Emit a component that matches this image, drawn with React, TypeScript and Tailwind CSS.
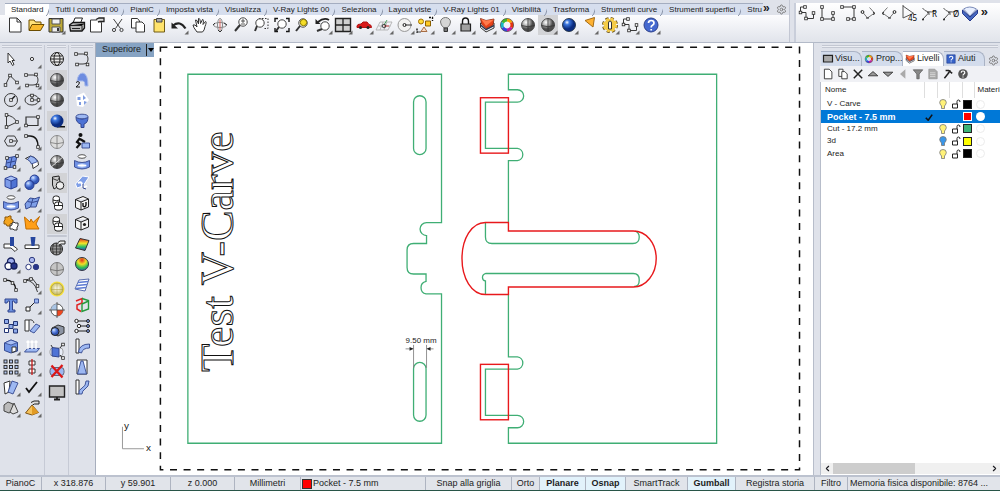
import type { ReactNode } from 'react';
import { ChevronLeft, ChevronRight, Settings } from 'lucide-react';

type Tool = { name: string; art: ReactNode; flyout?: boolean; pressed?: boolean };

const blueArt = { fill: '#9db8f2', stroke: '#33478f', strokeWidth: 0.9 };
const lineArt = { fill: 'none', stroke: '#3a3a3a', strokeWidth: 1 };
const boldArt = { fill: 'none', stroke: '#151515', strokeWidth: 1.4 };

function Nodes({ at }: { at: number[][] }) {
  return (
    <>
      {at.map(([x, y]) => (
        <rect key={`${x}-${y}`} x={x - 1.3} y={y - 1.3} width="2.6" height="2.6" fill="#fff" stroke="#222" strokeWidth=".8" />
      ))}
    </>
  );
}

function Ball({ fill = 'url(#grayBall)', lines = '#333' }: { fill?: string; lines?: string }) {
  return (
    <>
      <circle cx="10" cy="10" r="6.5" fill={fill} stroke={lines} strokeWidth=".8" />
      <path d="M10 3.5v13M3.5 10.5q6.5 2.5 13 0" fill="none" stroke={lines} strokeWidth=".8" />
    </>
  );
}

function Lens({ x = 12, y = 7, fill = '#fff' }: { x?: number; y?: number; fill?: string }) {
  return (
    <>
      <path d={`M${x - 3} ${y + 3}L4 16`} stroke="#333" strokeWidth="2" />
      <circle cx={x} cy={y} r="4.2" fill={fill} stroke="#444" />
    </>
  );
}

const sheet = <path d="M4.500 3h7.500l4 4v10H4.500zM12 3v4h4" fill="#fff" stroke="#333" />;
const polyline = (
  <>
    <path d="M8 4H3.500v5.500H9v6h7.500V10" {...lineArt} />
    <Nodes at={[[8, 4], [3.5, 9.5], [9, 15.5], [16.5, 10]]} />
  </>
);
const curveNodes = (
  <>
    <path d="M4 5h7q5 0 5 5t-5 5H6" {...lineArt} />
    <Nodes at={[[4, 5], [14, 4.5], [15.5, 15.5], [5, 15.5]]} />
  </>
);
const wireBall = (
  <g fill="none" stroke="#222">
    <circle cx="10" cy="10" r="6.500" fill="#eee" />
    <ellipse cx="10" cy="10" rx="3" ry="6.500" />
    <path d="M4.500 7h11M3.500 10h13M4.500 13h11" />
  </g>
);
const cylinderWall = (
  <>
    <path d="M2.500 8.500q7.500 4 15 0V15q-7.500 4-15 0z" fill="#6f90e4" stroke="#33478f" strokeWidth=".9" />
    <ellipse cx="10" cy="4.500" rx="4" ry="1.800" fill="#fff" stroke="#555" />
    <ellipse cx="10" cy="13.500" rx="4.500" ry="1.700" fill="#fff" stroke="#9db8f2" />
  </>
);
const capsules = (
  <g fill="#fff" stroke="#222">
    <rect x="6" y="3" width="6.500" height="8.500" rx="2.500" />
    <path d="M6 7q3 1.500 6.500 0" fill="none" />
    <rect x="7.500" y="9" width="8" height="8" rx="2.500" />
    <path d="M7.500 12.500h8M11.500 9v3.500" fill="none" />
  </g>
);
const openBox = <path d="M3.500 6.500 11 3.500l5.500 2.500v8L9 17l-5.500-2.500zM3.500 6.500 9 9l7.500-3M9 9v8" fill="#f4f4f4" stroke="#222" />;
const layerMark = (
  <>
    <path d="M3.500 8v4.500L9 17l8-4V8z" fill="#fff" stroke="#333" />
    <path d="M3.500 10 9 14.500l8-4" fill="none" stroke="#2b3a55" strokeWidth="1.500" />
    <path d="M3.500 3.500 9 5.500l8-1.500-1 6-7 3.500L4.500 9z" fill="#e8421a" stroke="#7e2712" strokeWidth=".8" />
    <path d="M4 4l5 7 8-6.500-8 1z" fill="#ff7a4c" />
  </>
);
const colorRing = (
  <g fill="none" strokeWidth="3">
    <path d="M10 5a5 5 0 0 1 4.300 2.500" stroke="#f5a500" />
    <path d="M14.300 7.500a5 5 0 0 1 0 5" stroke="#e5330f" />
    <path d="M14.300 12.500A5 5 0 0 1 10 15" stroke="#c21ba2" />
    <path d="M10 15a5 5 0 0 1-4.300-2.500" stroke="#3646df" />
    <path d="M5.700 12.500a5 5 0 0 1 0-5" stroke="#16b7c2" />
    <path d="M5.700 7.500A5 5 0 0 1 10 5" stroke="#43b829" />
    <circle cx="10" cy="10" r="6.600" stroke="#333" strokeWidth=".6" />
  </g>
);
const helpMark = (
  <>
    <circle cx="10" cy="10" r="7" fill="#4468cf" stroke="#2b3f8a" />
    <path d="M7.500 8q0-2.500 2.700-2.500T13 8q0 1.400-1.500 2.200T10.200 12.500M10.200 14v1.500" fill="none" stroke="#fff" strokeWidth="1.700" />
  </>
);

const standardTools: Tool[] = [
  { name: 'Nuovo', art: sheet },
  { name: 'Apri', art: <><path d="M3 15V5h5l1.500 2H15v3" fill="#ffe27a" stroke="#6c4d00" /><path d="M3 15.500 6 9.500h12l-3.500 6z" fill="#f8b92d" stroke="#6c4d00" /></> },
  { name: 'Salva', flyout: true, art: <><path d="M3 3.500h14v13.500H3z" fill="#bda938" stroke="#333" /><path d="M6 4h8v5H6zM6 12h8v5H6z" fill="#efefef" stroke="#555" /><path d="M11 13h2v3h-2z" fill="#333" /></> },
  { name: 'Stampa', art: <><path d="M6 8 8 3h7.500l-2 5" fill="#fff" stroke="#222" /><path d="M2.500 10 6 7.500h11.500V13L15 16H3.500z" fill="#bbb" stroke="#151515" strokeWidth="1.300" /><path d="M3 10.500h12l2-2M5 13.500h8M15 11v4" stroke="#222" /></> },
  { name: 'Proprietà', art: <><path d="M3.500 5h7l4 2.500V17h-11z" fill="#fff" stroke="#333" /><path d="M9 4.500 12 3h5v3.500h-4L11 7" fill="#ddd" stroke="#222" strokeWidth="1.300" /></> },
  { name: 'Taglia', art: <g fill="none" stroke="#444"><path d="M5.500 4l7 9.500M14 4l-6.500 9.500" /><circle cx="6" cy="15" r="1.600" /><circle cx="13.500" cy="15" r="1.600" /></g> },
  { name: 'Copia', art: <g fill="#fff" stroke="#333"><path d="M3.500 3.500h6L11.500 6v7h-8z" /><path d="M8 7h6l2.500 2.500V17H8z" /></g> },
  { name: 'Incolla', art: <><path d="M5 4.500h10.500V17H5z" fill="#ffe36c" stroke="#6f5b14" /><path d="M7.500 3.500h5.500V7H7.500z" fill="#aaa" stroke="#444" /></> },
  { name: 'Annulla', flyout: true, art: <><path d="M4 10.500q7-5.500 12.500 3" fill="none" stroke="#222" strokeWidth="2.200" /><path d="M2.500 7.500v6H9z" fill="#222" /></> },
  { name: 'Sposta vista', art: <path d="M7 17q-4-5-4-7 2-1 4 2L5.500 5q1.500-1 3 4V3.500q1.500-1 2 5l2-4q1.500-.5.500 5l2.500-3q1.500 0-.5 5-.5 4-2.500 5.500z" fill="#fff" stroke="#333" /> },
  { name: 'Ruota vista', art: <g fill="none" stroke="#888"><ellipse cx="10" cy="10" rx="6.500" ry="2.500" /><ellipse cx="10" cy="10" rx="2.500" ry="6.500" /><path d="M10 5v10" stroke="#d8665e" /><path d="M8 15l2 2 2-2M14 8l3 2M5 8l-2 2" stroke="#333" /></g> },
  { name: 'Zoom', art: <><Lens /><path d="M10 6h4M12 4v4M10 9h4" stroke="#333" strokeWidth=".8" /></> },
  { name: 'Zoom finestra', art: <><path d="M8 3.500h9v10h-5" fill="none" stroke="#333" strokeDasharray="1.500 1.500" /><Lens x={9} y={8} /></> },
  { name: 'Zoom estensioni', art: <><Lens x={10} y={9} /><path d="M3 7V3.500h3M14 3.500h3V7M17 13v3.500h-3M6 16.500H3V13" {...boldArt} /></> },
  { name: 'Zoom selezione', art: <><Lens x={11} y={8} /><circle cx="11.500" cy="7.500" r="3.200" fill="#f5dd27" stroke="#857500" /></> },
  { name: 'Vista precedente', flyout: true, art: <><Lens x={12} y={11} /><path d="M5 7q6-5 11-2" fill="none" stroke="#222" strokeWidth="1.800" /><path d="M2.500 4v5h5z" fill="#222" /></> },
  { name: 'Quattro viste', flyout: true, art: <><path d="M2.500 3.500h15v13h-15z" fill="#d0d0d0" stroke="#222" strokeWidth="1.400" /><path d="M10 3.500v13M2.500 10h15" stroke="#222" strokeWidth="1.300" /></> },
  { name: 'Vista destra', flyout: true, art: <><path d="M3 11q0-2 4-2l2-2h4l2 2.500q2.500 0 2.500 3H3z" fill="#d91b1b" stroke="#b01515" /><circle cx="6.500" cy="12.500" r="1.500" fill="#222" /><circle cx="14" cy="12.500" r="1.500" fill="#222" /></> },
  { name: 'Piano C', flyout: true, art: <g fill="none" stroke="#aaa" strokeWidth=".8"><path d="M6 7h12l-4 8H2zM4.500 11h12M9 7l-3 8M13 7l-3 8" /><path d="M10 11h5" stroke="#d02020" /><path d="M10 10l3-5" stroke="#24913b" /><circle cx="10" cy="11" r="1.800" stroke="#222" /></g> },
  { name: 'Punti oggetto', flyout: true, art: <g fill="none" stroke="#999"><circle cx="9.500" cy="10" r="6.500" fill="#f1f1f1" /><path d="M10 10h7" stroke="#333" /><circle cx="9.500" cy="10" r="1.500" stroke="#222" /></g> },
  { name: 'Seleziona oggetti', flyout: true, art: <><path d="M14 2.500h3.500V6M2 13.500V17h3.500" {...boldArt} strokeDasharray="2 1" /><circle cx="6" cy="6.500" r="2.500" fill="#ffdc37" stroke="#a36e00" /><path d="M10.500 6h5v5h-5z" fill="#ffca24" stroke="#8c6100" /><path d="M9 12l3 4.500H6z" fill="#f8dcc6" stroke="#a76c44" /></> },
  { name: 'Nascondi', flyout: true, art: <><path d="M8 13q-3.500-3-3.500-6a5 4.500 0 0 1 10 0q0 3-3.500 6z" fill="#d5d5d5" stroke="#777" /><path d="M8 13h3.500v3.500H8z" fill="#777" stroke="#333" /></> },
  { name: 'Blocca', flyout: true, art: <><path d="M6.500 10V6.500Q6.500 3 9.500 3t3 3.500V10" {...boldArt} /><path d="M5 9h9.500v7H5z" fill="#a0a0a0" stroke="#222" strokeWidth="1.200" /></> },
  { name: 'Livelli', flyout: true, art: layerMark },
  { name: 'Colori', flyout: true, art: colorRing },
  { name: 'Ombreggiata', art: <Ball /> },
  { name: 'Vista ombreggiata', flyout: true, pressed: true, art: <Ball /> },
  { name: 'Rendering', flyout: true, art: <circle cx="10" cy="10" r="6.500" fill="url(#deepBall)" stroke="#123" strokeWidth=".8" /> },
  { name: 'Luce direzionale', flyout: true, art: <path d="M6 5.500 15.500 2.500 14 12z" fill="#ffb232" stroke="#a56b14" /> },
  { name: 'Opzioni', flyout: true, art: <><circle cx="10" cy="10" r="6" fill="#f5cc48" stroke="#5d4612" strokeWidth="4" strokeDasharray="2.700 2" /><circle cx="10" cy="10" r="6" fill="#f5cc48" stroke="#f5cc48" strokeWidth="2.500" strokeDasharray="2.700 2" /><path d="M8.500 14V8q0-2 1.500-2t1.500 2v6z" fill="#fff" stroke="#333" /></> },
  { name: 'Quote', flyout: true, art: polyline },
  { name: 'Guida', flyout: true, art: helpMark },
];

const drawTools: Tool[] = [
  { name: 'Seleziona', art: <path d="M7 4v10l2-2 2.500 4.500 1.500-1-2-4h2.500z" fill="#fff" stroke="#333" /> },
  { name: 'Punto', flyout: true, art: <circle cx="10" cy="10" r="1.600" fill="#fff" stroke="#333" /> },
  { name: 'Polilinea', flyout: true, art: <><path d="M4.500 15 9 5.500l7 7" {...lineArt} /><Nodes at={[[4.5, 15], [9, 5.5], [16, 12.5]]} /></> },
  { name: 'Curva', flyout: true, art: curveNodes },
  { name: 'Cerchio', flyout: true, art: <><circle cx="10" cy="10" r="6.500" {...lineArt} /><path d="M10 10l4-4" {...boldArt} /><Nodes at={[[10, 10]]} /></> },
  { name: 'Ellisse', flyout: true, art: <><ellipse cx="10" cy="10" rx="7" ry="5" {...lineArt} /><path d="M10 10h7M10 10V5" {...lineArt} /><Nodes at={[[10, 10], [16.5, 10], [10, 5.5]]} /></> },
  { name: 'Arco', flyout: true, art: <><path d="M5.500 4q7 1 10.500 7M5.500 4v12L16 11" {...lineArt} /><Nodes at={[[5.5, 4], [5.5, 16], [16, 11]]} /></> },
  { name: 'Rettangolo', flyout: true, art: <><path d="M4 6h12v8.500H4z" fill="none" stroke="#333" strokeWidth="1.200" /><Nodes at={[[4, 14.5], [16, 6]]} /></> },
  { name: 'Poligono', flyout: true, art: <><path d="M6.500 5h7l3 5-3 5h-7l-3-5z" {...lineArt} /><path d="M10 10h6" {...lineArt} /><Nodes at={[[10, 10]]} /></> },
  { name: 'Raccorda', flyout: true, art: <><path d="M4 5h4q8 0 8 11" {...boldArt} /><Nodes at={[[4, 5], [16, 16]]} /></> },
  { name: 'Superficie', flyout: true, art: <><path d="M6 6l10-2-2.500 11-9 1z" fill="#6f90e4" stroke="#33478f" /><path d="M11 5 9 15M5.500 11l9-2" stroke="#33478f" /><Nodes at={[[6, 6], [16, 4], [13.5, 15], [4.5, 16]]} /></> },
  { name: 'Superficie curva', flyout: true, art: <><path d="M3.500 6.500 8.500 4q8 2 8 9L11 16.500q0-8-7.500-10z" fill="#fff" stroke="#333" /><path d="M8.500 4q5 1 7 5.500L9.500 12q-1-3-4-4.500z" {...blueArt} /></> },
  { name: 'Parallelepipedo', flyout: true, art: <><path d="M4 6.500 10 4l6 2.500v8L10 17l-6-2.500z" fill="#a9c0f5" /><path d="M4 6.500 10 9v8l-6-2.500z" fill="#7d9cea" /><path d="M16 6.500 10 9v8l6-2.500z" fill="#4f73d4" /><path d="M4 6.500 10 4l6 2.500v8L10 17l-6-2.500zM4 6.500 10 9l6-2.500M10 9v8" fill="none" stroke="#24388c" strokeWidth=".9" /></> },
  { name: 'Unione solidi', flyout: true, art: <><circle cx="12.500" cy="7.500" r="4.500" fill="url(#blueBall)" stroke="#24388c" /><circle cx="7.500" cy="13" r="4.500" fill="url(#blueBall)" stroke="#24388c" /></> },
  { name: 'Cilindro', flyout: true, art: cylinderWall },
  { name: 'Mesh', flyout: true, art: <><path d="M3 11 8 5q5 2 9.500-1L14 14q-6-1-10 2z" fill="#7f9fe8" stroke="#33478f" /><path d="M5.500 8.500q5 2 10.500-.5M11 5.500 8.500 14" fill="none" stroke="#33478f" /></> },
  { name: 'Esplodi', art: <><path d="M4 4h3l1-1h2v3l2 1v3l-3 1v2H6l-1-2H3V8l1-1z" fill="#f4a51f" stroke="#8a570a" /><path d="M11 10l2-1 1 1h3v3l-1 1v3h-3l-1-1H9v-3l2-1z" fill="#fff" stroke="#333" /></> },
  { name: 'Unisci', art: <path d="M2.500 4 8 9l1-3 2 3.500 6.500-6L14 11l3 5H4z" fill="#ff9f18" stroke="#c36d00" /> },
  { name: 'Tronca', art: <><path d="M3 10h7l6.500 5-2.500 2.500-4-3.500H3z" fill="#fff" stroke="#333" /><path d="M9 3h4v9H9z" fill="#27479f" /></> },
  { name: 'Dividi', art: <><path d="M3 11h14v3.500H3z" fill="#fff" stroke="#333" /><path d="M8.500 3h5l-1 9h-3z" fill="#27479f" /></> },
  { name: 'Raggruppa', flyout: true, art: <g stroke="#151f5c" strokeWidth="1.300"><circle cx="10" cy="7.500" r="3.500" fill="#9eaeee" /><circle cx="7.500" cy="12" r="3.500" fill="#fff" /><circle cx="13" cy="12" r="3" fill="#27358b" /></g> },
  { name: 'Separa gruppo', art: <g stroke="#303c80"><circle cx="10" cy="6" r="2.700" fill="#a9b6ee" /><circle cx="6.500" cy="13" r="2.700" fill="#fff" /><circle cx="14" cy="13" r="2.700" fill="#27358b" /></g> },
  { name: 'Modifica punti', art: <><path d="M4 5q10 0 11 10" {...boldArt} /><Nodes at={[[4, 5], [11.5, 8], [15, 15]]} /></> },
  { name: 'Curva punti', flyout: true, art: <><path d="M2.500 5q10 0 13 12M4 5l6-2 6 8" {...lineArt} /><Nodes at={[[3, 6], [9, 4], [15.5, 11]]} /></> },
  { name: 'Testo', art: <path d="M4 4h12v4h-2l-1-2h-1.500v9H14v2H7v-2h1.500V6H7L6 8H4z" fill="#6d90df" stroke="#33478f" /> },
  { name: 'Sposta', flyout: true, art: <><path d="M7 13l6-6" stroke="#222" /><path d="M4 12h4v4H4z" fill="#fff" stroke="#222" /><path d="M12.500 4h4v4h-4z" {...blueArt} /></> },
  { name: 'Serie', art: <g stroke="#223473"><path d="M3.500 3.500h4v4h-4zM12.500 5.500h4v4h-4zM8 8.500h4v4H8zM12.500 13h4v4h-4z" fill="#8fabea" /><path d="M3.500 12.500h4v4h-4z" fill="#fff" /></g> },
  { name: 'Ruota', art: <><path d="M3 4h4v11H3z" fill="#fff" stroke="#333" /><path d="M14 8l4 2-6 7-4-2z" {...blueArt} /><path d="M7 4q4-1 5 3" {...lineArt} /></> },
  { name: 'Booleana', flyout: true, art: <><path d="M3.500 7 10 4l6.500 2.500V15L10 17l-6.500-2.500z" fill="#6f93e4" stroke="#33478f" /><path d="M3.500 7 10 9l6.500-2.500L10 4z" fill="#a9c0f5" stroke="#33478f" strokeWidth=".8" /><path d="M11 11h4v4l-4 1.500z" fill="#fff" stroke="#333" /></> },
  { name: 'Proietta', flyout: true, art: <><path d="M2.500 16l3-3.500h12l-3 3.500z" {...blueArt} /><path d="M6 13V5M10 13V5M14 13V5M4.500 6.500 6 5l1.500 1.500M8.500 6.500 10 5l1.500 1.500M12.500 6.500 14 5l1.500 1.500" fill="none" stroke="#fff" strokeWidth="1.500" /></> },
  { name: 'Serie rettangolare', flyout: true, art: <g fill="#b4c7ef" stroke="#222" strokeWidth=".9">{[4.5, 10, 15.5].map((x) => [4.5, 10, 15.5].map((y) => <rect key={`${x}-${y}`} x={x - 1.5} y={y - 1.5} width="3" height="3" />))}</g> },
  { name: 'Allinea', flyout: true, art: <><path d="M7 4h6v4H7zM7 12h6v4H7z" fill="#fff" stroke="#333" /><path d="M10 2v16" stroke="#c71818" strokeWidth="1.300" /></> },
  { name: 'Scala', flyout: true, art: <><path d="M3 6l6-2-1 11-4 2z" fill="#fff" stroke="#333" /><path d="M11 4l6 2-5 11-5-2z" {...blueArt} /></> },
  { name: 'Controlla', flyout: true, art: <path d="M4 11l3 4 8-10" fill="none" stroke="#111" strokeWidth="1.800" /> },
  { name: 'Solidi', flyout: true, art: <><path d="M3 7l4-3 5 2v7l-4 2-5-2z" fill="#bbb" stroke="#444" /><path d="M13 5l4 9-5 2-3-2z" fill="#ddd" stroke="#444" /></> },
  { name: 'Piramide', flyout: true, art: <><path d="M10 7l6.500 7.500L10 17l-6.500-2z" fill="#f5c25a" stroke="#7f5417" /><path d="M10 7v10l6.500-2.500z" fill="#e19a24" /><path d="M9 4.500 12 3h5v3h-4.500l-2 1" fill="#ddd" stroke="#222" /></> },
];

const displayTools: Tool[] = [
  { name: 'Wireframe', art: wireBall },
  { name: 'Shaded', pressed: true, art: <Ball /> },
  { name: 'Shaded tutto', art: <Ball /> },
  { name: 'Render vista', pressed: true, art: <><path d="M10 15h8v1.500h-8z" fill="#111" /><circle cx="10" cy="10" r="6.500" fill="url(#deepBall)" /></> },
  { name: 'Ghosted', art: <Ball fill="#ddd" lines="#777" /> },
  { name: 'Raggi X', art: <><Ball /><path d="M3 16 17 4" stroke="#ddd" /></> },
  { name: 'Tecnica', pressed: true, art: <><path d="M5.500 4 12 3l1.500 9-6.500 4-1.500-4z" fill="#ccc" stroke="#222" /><circle cx="13" cy="12.500" r="3.800" fill="#eee" stroke="#222" /><path d="M5.500 5.500l5 2 2-3" {...lineArt} /></> },
  { name: 'Artistica', art: capsules },
  { name: 'Penna', pressed: true, art: capsules },
];

const renderTools: Tool[] = [
  { name: 'Mesh di rendering', art: <><circle cx="9.500" cy="11" r="6" fill="#999" stroke="#222" /><path d="M9.500 5v12M3.500 11h12M5 8h9M5 14h9M6.500 6q-2 5 0 10M12.500 6q2 5 0 10" fill="none" stroke="#333" strokeWidth=".8" /><path d="M11 4.500 13 3h5v3h-4l-2 1" fill="#eee" stroke="#222" /></> },
  { name: 'Piatta', art: <Ball fill="#c5c5c5" lines="#666" /> },
  { name: 'Evidenzia', art: <><circle cx="10" cy="10" r="7.500" fill="#fae33e" /><circle cx="10" cy="10" r="6" fill="url(#yellowBall)" stroke="#a89b3c" strokeWidth=".7" /><path d="M4 10.500h12M10 4v12" stroke="#a89b3c" strokeWidth=".5" /></> },
  { name: 'Bersaglio', art: <><circle cx="10" cy="10" r="6" fill="#fff" stroke="#555" /><path d="M10 10V4a6 6 0 0 0-6 6z" fill="#a9c4e4" /><path d="M10 10v6a6 6 0 0 0 6-6z" fill="#ef4821" /><path d="M10 2v16M2 10h16" stroke="#444" strokeWidth=".8" /></> },
  { name: 'Cattura', art: <><path d="M5 8l6-3 6 2v6l-6 3-5-2z" fill="#8d95a4" stroke="#333" /><circle cx="8" cy="11.500" r="4" fill="url(#blueBall)" stroke="#222" /></> },
  { name: 'Piano di taglio', art: <><rect x="3" y="7" width="13" height="8" rx="3" fill="#e8edf8" stroke="#888" strokeWidth=".7" /><path d="M5 6.500l7 1V16l-7-1z" fill="#4e73d5" stroke="#33478f" /><path d="M13 7l3-4M13 14l3 4M4 4l1.500 2.500" stroke="#333" /><Nodes at={[[16, 3.5], [16, 17]]} /></> },
  { name: 'Elimina taglio', art: <><rect x="3" y="6.500" width="14" height="8" rx="3" fill="#9db8f2" stroke="#667" /><path d="M4.500 4.500l11 12M15.500 4l-11 12" stroke="#db1818" strokeWidth="2.300" /></> },
  { name: 'Schermo', art: <><path d="M2.500 4h15v11h-15z" fill="#c2c2c2" stroke="#222" strokeWidth="1.400" /><path d="M10 15v2.500M7 17.500h6" stroke="#222" strokeWidth="1.800" /></> },
];

const bend = (d: string) => (
  <><path d="M4 3h3v14H4z" fill="#fff" stroke="#333" /><path d={d} {...blueArt} /></>
);

const surfaceTools: Tool[] = [
  { name: 'Punti di controllo', art: curveNodes },
  { name: 'Grado 2', art: <><path d="M5 11q1-8 6-8 5 1 5 13h-3q0-5-2-5z" fill="#6d8ce0" stroke="#a9bbea" /><path d="M4 12.500q2-2 3.500 0 0 2-3.500 4.500H8" {...lineArt} stroke="#111" /></> },
  { name: 'Sviluppa', art: <><path d="M4 6l8-3.500L17 10l-6 7-6-1z" fill="#fff" /><path d="M5.500 7h3v3h-3zM11 5l3 3-3 2zM7 12h2v3H7zM12 11l3 1-3 3z" fill="#7f9ce0" /></> },
  { name: 'Imbuto', art: <><path d="M4 6q6 4 12 0 0 6-4 7v3.500H9V13Q4 12 4 6z" fill="#4e73d5" stroke="#33478f" /><ellipse cx="10" cy="5.500" rx="6" ry="2.300" {...blueArt} /></> },
  { name: 'Applica', art: <><circle cx="8.500" cy="4" r="2" fill="#111" /><path d="M8 7 5 11l3 2-3.500 4M8 8l5 3" fill="none" stroke="#111" strokeWidth="2.200" /><path d="M10 12h7.500v5H10z" {...blueArt} /></> },
  { name: 'Fluisci', art: cylinderWall },
  { name: 'Orienta', art: <><path d="M3.500 12l7-8 6.500 1-6 9-6 2z" fill="#7f9fe8" stroke="#fff" /><path d="M6 11q4-2 4 2t5 1" fill="none" stroke="#fff" strokeWidth="2" /><path d="M11 12v4l3 1" fill="none" stroke="#33478f" /></> },
  { name: 'Cubo U', art: <>{openBox}<path d="M11 10v3q2 2 3-1V9" {...boldArt} /></> },
  { name: 'Cubo punto', art: <>{openBox}<circle cx="12.500" cy="11.500" r="1.600" fill="#222" /></> },
  { name: 'Curvatura', art: <path d="M3.500 14 8 4.500l9 2-4 10z" fill="url(#rainbow)" stroke="#333" /> },
  { name: 'Analisi sfera', art: <circle cx="10" cy="10" r="6.500" fill="url(#rainbowBall)" stroke="#334" /> },
  { name: 'Zebra', art: <><path d="M3 14 7 5l10-1-4 12z" fill="#fff" stroke="#344b9a" strokeWidth=".8" /><path d="M6 7.500l10-1M5 10.500l10-1M4 13.500l10-1" stroke="#5d7bd3" strokeWidth="1.600" /></> },
  { name: 'Bordi', art: <><path d="M4 6l6-2.500V8L5 10v4l4 2.500" fill="none" stroke="#df2222" strokeWidth="1.500" /><path d="M10 3.500l6.500 2V14L10 16.500V9l6.500-3" fill="none" stroke="#24993c" strokeWidth="1.400" /></> },
  { name: 'Connessioni', art: <><path d="M4 5h12M6 10h10M4 15h12" stroke="#222" /><g fill="#fff" stroke="#222"><circle cx="4.500" cy="5" r="1.700" /><circle cx="7" cy="10" r="1.700" /><circle cx="4.500" cy="15" r="1.700" /></g><g fill="#7a96df" stroke="#222"><circle cx="16" cy="5" r="1.500" /><circle cx="16" cy="10" r="1.500" /><circle cx="16" cy="15" r="1.500" /></g></> },
  { name: 'Piega', art: bend('M6.500 16q1-8 11-8v4q-7 0-8 5z') },
  { name: 'Rastrema', art: <><path d="M5 3h10v14H5z" fill="#fff" stroke="#333" /><path d="M9 4h2l3.500 13h-9z" {...blueArt} /></> },
  { name: 'Scorri', art: bend('M7 17q-1-4 3-6t4-7h3q0 6-4 8-3 2-3 5z') },
];

const angleArc = <><path d="M4.500 9l5 6 7-5-5-5.500" fill="none" stroke="#777" /><path d="M8 15h3M15 9l1.500 1-1 2" stroke="#222" fill="none" /><circle cx="4.500" cy="9" r="1.400" fill="#fff" stroke="#222" /></>;
const leader = <><path d="M4 16 10 9.500M3.500 5q4 6 13.500 3M10 9.500V12M10 9.500H8" {...lineArt} stroke="#555" /><circle cx="4" cy="16.500" r="1" fill="#222" /></>;
const dimTools: Tool[] = [
  { name: 'Quota lineare', art: polyline },
  { name: 'Quota verticale', art: <><path d="M5 4v12h11V10" {...lineArt} /><Nodes at={[[5, 4], [5, 16], [16, 10], [16, 16]]} /></> },
  { name: 'Quota orizzontale', art: <><path d="M4 4h12v12h-5" {...lineArt} /><Nodes at={[[4, 4], [10, 16], [16, 4], [16, 16]]} /></> },
  { name: 'Quota allineata', art: angleArc },
  { name: 'Quota ruotata', art: <g transform="translate(20 0) scale(-1 1)">{angleArc}</g> },
  { name: 'Quota angolare', art: <><path d="M4 2v13l11-5M4 3l10 7" {...lineArt} stroke="#555" /><text x="9" y="18" className="font-sans text-[8px]">45</text></> },
  { name: 'Quota raggio', art: <>{leader}<text x="13" y="14" className="font-sans text-[8px]">R</text></> },
  { name: 'Quota diametro', art: <>{leader}<text x="13" y="14" className="font-sans text-[8px]">Ø</text></> },
  { name: 'Direttrice', art: <><path d="M2.500 7 10 14l7.500-7v3.500L10 18l-7.500-7.500z" fill="#4668c0" stroke="#24388c" /><path d="M3.500 6q6-4 13 0L10 13z" fill="#e8efff" stroke="#7b8bb8" /></> },
];

const tabs = [
  'Standard', 'Tutti i comandi 00', 'PianiC', 'Imposta vista', 'Visualizza', 'V-Ray Lights 00', 'Seleziona',
  'Layout viste', 'V-Ray Lights 01', 'Visibilità', 'Trasforma', 'Strumenti curve', 'Strumenti superfici', 'Stru',
];

const layers = [
  { name: 'V - Carve', color: 'bg-black', bulb: '#fff27a' },
  { name: 'Pocket - 7.5 mm', color: 'bg-[#ff0000]', bulb: '', current: true },
  { name: 'Cut - 17.2 mm', color: 'bg-[#3cb478]', bulb: '#fff27a' },
  { name: '3d', color: 'bg-[#ffff00]', bulb: '#3a96e8' },
  { name: 'Area', color: 'bg-black', bulb: '#fff27a' },
];

const panelTabs = [
  { label: 'Visu...', icon: <path d="M2.500 4h15v11h-15z" fill="#aaa" stroke="#222" strokeWidth="2" /> },
  { label: 'Prop...', icon: colorRing },
  { label: 'Livelli', icon: layerMark, active: true },
  { label: 'Aiuti', icon: <><path d="M3 3h14v14H3z" fill="#3763c9" stroke="#223c8c" /><path d="M7.500 8q0-2.500 2.700-2.500T13 8q0 1.400-1.500 2.200T10.200 12.500M10.200 14v1.500" fill="none" stroke="#fff" strokeWidth="1.800" /></> },
];

const layerTools: Tool[] = [
  { name: 'Nuovo livello', art: <path d="M4 2h8l4.500 4.500V18H4z" fill="#fff" stroke="#333" strokeWidth="1.500" /> },
  { name: 'Nuovo sottolivello', art: <g fill="#fff" stroke="#333" strokeWidth="1.500"><path d="M3 2h7v12H3z" /><path d="M8 6h5l4 4v8H8z" /></g> },
  { name: 'Elimina livello', art: <path d="M3 3l14 14M17 3 3 17" stroke="#222" strokeWidth="2.500" /> },
  { name: 'Sposta su', art: <path d="M2 13l8-7 8 7z" fill="#999" stroke="#333" strokeWidth="1.500" /> },
  { name: 'Sposta giù', art: <path d="M2 7l8 7 8-7z" fill="#999" stroke="#333" strokeWidth="1.500" /> },
  { name: 'Livello superiore', art: <path d="M14 2v16l-9-8z" fill="#aaa" /> },
  { name: 'Filtra livelli', art: <path d="M2 3h16l-6 7v8H8v-8z" fill="#888" stroke="#444" /> },
  { name: 'Strumenti elenco', art: <><path d="M3 2h10l4 4v12H3z" fill="#aaa" stroke="#888" /><path d="M5 8h9M5 11h9M5 14h9" stroke="#eee" /></> },
  { name: 'Strumenti', art: <path d="M4 17 12 7M6 4l5 0 6 5M14 4l-4 5" fill="none" stroke="#222" strokeWidth="2.500" /> },
  { name: 'Guida livelli', art: <><circle cx="10" cy="10" r="8" fill="#555" /><path d="M7 8q0-3 3-3t3 3q0 1-1.500 2T10 12.500M10 14v2" fill="none" stroke="#fff" strokeWidth="2" /></> },
];

const statusCells = [
  { label: 'PianoC', width: 'w-[42px]' },
  { label: 'x 318.876', width: 'w-16' },
  { label: 'y 59.901', width: 'w-[65px]' },
  { label: 'z 0.000', width: 'w-16' },
  { label: 'Millimetri', width: 'w-[66px]' },
  { label: 'Pocket - 7.5 mm', width: 'w-[125px]', swatch: true },
  { label: 'Snap alla griglia', width: 'w-[86px]' },
  { label: 'Orto', width: 'w-7' },
  { label: 'Planare', width: 'w-[46px]', on: true },
  { label: 'Osnap', width: 'w-10', on: true },
  { label: 'SmartTrack', width: 'w-[62px]' },
  { label: 'Gumball', width: 'w-12', on: true },
  { label: 'Registra storia', width: 'w-[79px]' },
  { label: 'Filtro', width: 'w-[33px]' },
];

function ToolButton({ tool }: { tool: Tool }) {
  return (
    <button
      aria-label={tool.name}
      className={`size-5 shrink-0 ${tool.pressed ? 'bg-[#d2d3d6]' : ''}`}
    >
      <svg viewBox="0 0 20 20" className="size-5">
        {tool.art}
        {tool.flyout && <path d="M19.500 15.500V19.500h-4z" fill="#666" />}
      </svg>
    </button>
  );
}

function Grip() {
  return <div className="mx-[2px] h-[3px] shrink-0 border-y border-[#c3c7d2] bg-[#eceef3]" />;
}

function TopBar() {
  return (
    <header className="flex h-[42px] shrink-0">
      <div className="flex w-[790px] min-w-0 flex-col border-r border-[#c3c7d3] pt-[3px]">
        <nav className="flex h-3 items-stretch pr-[2px] pl-[5px]">
          <div className="flex min-w-0 flex-1">
            {tabs.map((tab, i) => (
              <button
                key={tab}
                className={`relative shrink-0 border-t border-[#a4adc0] px-[6px] text-[8px] leading-[12px] whitespace-nowrap ${i === 0 ? 'bg-white' : 'bg-[#d6deee]'} ${i === tabs.length - 1 ? 'pr-px' : ''}`}
              >
                {tab}
                {i < tabs.length - 1 && (
                  <svg viewBox="0 0 6 12" className="absolute top-0 -right-[3px] h-3 w-[6px]">
                    <path d="M0 12Q2 11 3 6T6 0" fill="none" stroke="#8a94a8" />
                  </svg>
                )}
              </button>
            ))}
            <span className="text-[12px] leading-[11px] font-bold">»</span>
          </div>
          <button aria-label="Opzioni barra"><Settings size={11} className="text-[#777]" /></button>
        </nav>
        <div className="flex flex-1 items-start bg-linear-to-b from-[#fcfcfe] to-[#e1e4eb] pl-[5px]">
          <div className="flex w-[656px] justify-between">
            {standardTools.map((tool) => <ToolButton key={tool.name} tool={tool} />)}
          </div>
        </div>
      </div>
      <div className="mt-[3px] ml-1 flex flex-1 items-start overflow-hidden border-l-2 border-[#c9ceda] bg-linear-to-b from-white to-[#e1e4eb] pl-px">
        <div className="flex w-[196px] shrink-0 justify-between pr-[5px]">
          {dimTools.map((tool) => <ToolButton key={tool.name} tool={tool} />)}
          <span className="text-[13px] leading-[18px] font-bold">»</span>
        </div>
      </div>
    </header>
  );
}

function Sidebar() {
  return (
    <aside className="flex w-[96px] shrink-0 border-r border-[#a7aebd] pt-[2px]">
      <div className="w-[45px] border-r border-[#c6cad5]">
        <Grip />
        <div className="mt-px grid h-[369px] grid-cols-[20px_20px] content-between gap-x-px pl-px">
          {drawTools.map((tool) => <ToolButton key={tool.name} tool={tool} />)}
        </div>
      </div>
      <div className="flex w-6 flex-col items-center border-r border-[#c6cad5]">
        <div className="mb-px w-full"><Grip /></div>
        <div className="flex h-[185px] flex-col justify-between">
          {displayTools.map((tool) => <ToolButton key={tool.name} tool={tool} />)}
        </div>
        <div className="my-px h-[2px] w-5 rounded bg-[#c3c7d2]" />
        <div className="flex h-[164px] flex-col justify-between">
          {renderTools.map((tool) => <ToolButton key={tool.name} tool={tool} />)}
        </div>
      </div>
      <div className="flex flex-1 flex-col items-center">
        <div className="mb-px w-full"><Grip /></div>
        <div className="flex h-[348px] flex-col justify-between">
          {surfaceTools.map((tool) => <ToolButton key={tool.name} tool={tool} />)}
        </div>
      </div>
    </aside>
  );
}

function Viewport() {
  return (
    <section className="relative min-w-0 flex-1 border-r border-[#b7bdca] bg-white">
      <button className="absolute top-0 left-0 flex h-[14px] w-[58px] items-center bg-[#86a3c3] pl-[6px] text-[9px]">
        Superiore
        <span className="ml-auto flex h-3 w-2 items-center border-l border-[#222]">
          <svg viewBox="0 0 6 4" className="ml-px h-1 w-[6px]"><path d="M0 0h6L3 4z" /></svg>
        </span>
      </button>
      <svg viewBox="96 43 718 432" className="h-full w-full" fill="none">
        <rect x="160.500" y="47" width="640" height="423" stroke="#111" strokeWidth="1.500" strokeDasharray="7 6.600" />
        <g stroke="#3fae74" strokeWidth="1.300">
          <path d="M188 74H442V222.500H427a6.400 6.400 0 0 0 0 13V243.500H414q-6.500 0-6.500 6.500V267.500q0 6.500 6.500 6.500H426.500V281.500a6.400 6.400 0 0 0 0 12.500H442V443.500H188z" />
          <rect x="414" y="95.500" width="12.500" height="59" rx="6.250" />
          <rect x="414" y="362.500" width="12.500" height="59" rx="6.250" />
          <path d="M509 222V160.500h9a6.200 6.200 0 0 0 0-12.300H486V102h32a6.200 6.200 0 0 0 0-12.500h-9V74H717.500V443.500H509V428h9a6.200 6.200 0 0 0 0-12.500H486V369.300h32a6.200 6.200 0 0 0 0-12.300h-9V294" />
          <path d="M486 223V237q0 6.500 6.500 6.500H633.500q6.500 0 6.500-6.500 0-4.500-4-6M486 294V281q-3-.5-3-3.500t3.500-4H634q6 0 6 6.500t-5 6.500" />
        </g>
        <g stroke="#e8191c" strokeWidth="1.400">
          <rect x="481" y="97.500" width="28" height="55.500" />
          <rect x="481" y="364.500" width="28" height="55.500" />
          <path d="M509 222.500H486C472 222.500 462.500 239 462.500 258.500S472 294.500 486 294.500H509V287H634C647 287 657 274 657 258.500S647 231 634 231H509z" />
        </g>
        <text
          transform="translate(233 372) rotate(-90)"
          stroke="#111"
          strokeWidth="1"
          className="font-['Liberation_Serif',serif] text-[46px]"
        >
          Test V-Carve
        </text>
        <text x="406" y="343" fill="#222" className="text-[8px]">9.50 mm</text>
        <path d="M414 345v23M427 345v23M406 349h7M434 349h-6" stroke="#777" strokeWidth=".8" />
        <path d="M410 347l4 2-4 2zM431 347l-4 2 4 2z" fill="#222" />
        <path d="M122.500 427v22H144" stroke="#999" />
        <text x="124" y="429" fill="#222" className="text-[10px]">y</text>
        <text x="146" y="451" fill="#222" className="text-[10px]">x</text>
      </svg>
    </section>
  );
}

function LayerPanel() {
  return (
    <aside className="ml-[6px] flex w-[180px] shrink-0 flex-col pt-[2px]">
      <Grip />
      <nav className="mt-[2px] flex h-4 items-end pl-px">
        {panelTabs.map((tab) => (
          <button
            key={tab.label}
            className={`flex h-[15px] w-[41px] items-center gap-px rounded-tr-lg border-t border-r border-[#aab3c5] pl-px text-[9px] whitespace-nowrap ${tab.active ? 'bg-white' : 'bg-[#d3dcec]'}`}
          >
            <svg viewBox="0 0 20 20" className="size-3 shrink-0">{tab.icon}</svg>
            {tab.label}
          </button>
        ))}
        <button aria-label="Opzioni pannelli" className="mr-px ml-auto self-end"><Settings size={11} className="text-[#777]" /></button>
      </nav>
      <div className="flex h-4 shrink-0 items-center gap-[3px] bg-[#f0f1f5] pl-[2px]">
        {layerTools.map((tool) => (
          <button key={tool.name} aria-label={tool.name} className="flex">
            <svg viewBox="0 0 20 20" className="size-3">{tool.art}</svg>
          </button>
        ))}
      </div>
      <div className="flex flex-1 flex-col border-l border-[#b7bdca] bg-white">
        <table className="h-[78px] w-full table-fixed text-[8px] leading-[10px]">
          <thead>
            <tr className="h-4">
              <th className="pl-1 text-left font-normal">Nome</th>
              <th aria-label="Corrente" className="w-[13px] border-l border-[#dedede]" />
              <th aria-label="Acceso" className="w-3 border-l border-[#dedede]" />
              <th aria-label="Bloccato" className="w-[13px] border-l border-[#dedede]" />
              <th aria-label="Colore" className="w-3 border-l border-[#dedede]" />
              <th className="w-[26px] border-l border-[#dedede] pl-[3px] text-left font-normal">Materi</th>
            </tr>
          </thead>
          <tbody>
            {layers.map((layer) => (
              <tr key={layer.name} className={layer.current ? 'bg-[#0078d7] text-[9px] font-bold text-white' : ''}>
                <td className="pl-[6px] whitespace-nowrap">{layer.name}</td>
                <td>
                  {layer.current && <svg viewBox="0 0 10 10" className="h-2 w-[10px]"><path d="M1 6l3 3 5-7" fill="none" stroke="#111" strokeWidth="2" /></svg>}
                </td>
                <td>
                  {layer.bulb && (
                    <svg viewBox="0 0 8 10" className="mx-auto h-[10px] w-2">
                      <path d="M2.500 7Q.7 5 .7 3.500a3.300 3 0 0 1 6.600 0Q7.300 5 5.500 7v2.500h-3z" fill={layer.bulb} stroke="#777" strokeWidth=".8" />
                    </svg>
                  )}
                </td>
                <td>
                  {layer.bulb && (
                    <svg viewBox="0 0 10 10" className="mx-auto h-[10px] w-[10px]">
                      <path d="M1.500 5h5v4h-5zM6 5V2.500q0-1.500 1.500-1.500T9 3" fill="#fff" stroke="#222" />
                    </svg>
                  )}
                </td>
                <td><div className={`ml-px size-[9px] border ${layer.current ? 'border-white' : 'border-[#222]'} ${layer.color}`} /></td>
                <td><div className={`ml-[2px] size-[9px] rounded-full bg-white ${layer.current ? '' : 'border border-[#ececec]'}`} /></td>
              </tr>
            ))}
          </tbody>
        </table>
        <div className="mt-auto mb-px flex h-[11px] items-center bg-[#f0f0f0]">
          <button aria-label="Scorri a sinistra" className="flex w-3 justify-center"><ChevronLeft size={9} strokeWidth={3} /></button>
          <div className="h-full flex-1"><div className="h-full w-[53%] bg-[#cdcdcd]" /></div>
          <button aria-label="Scorri a destra" className="flex w-3 justify-center"><ChevronRight size={9} strokeWidth={3} /></button>
        </div>
      </div>
    </aside>
  );
}

function StatusBar() {
  return (
    <footer className="flex h-4 shrink-0 border-t-2 border-b border-t-[#bcc2cf] border-b-[#285548] bg-[#e1e4ea] text-[9px]">
      {statusCells.map((cell) => (
        <button
          key={cell.label}
          className={`flex shrink-0 items-center border-r border-[#aeb4c1] whitespace-nowrap ${cell.width} ${cell.swatch ? 'gap-px' : 'justify-center'} ${cell.on ? 'bg-[#e2f2fb] font-bold' : ''}`}
        >
          {cell.swatch && <span className="ml-px size-[10px] border border-[#333] bg-[#ff0000]" />}
          {cell.label}
        </button>
      ))}
      <span className="min-w-0 flex-1 truncate pl-[2px]">Memoria fisica disponibile: 8764 ...</span>
    </footer>
  );
}

export default function App() {
  return (
    <main className="flex h-screen flex-col overflow-hidden bg-[#dfe2ea] font-['Liberation_Sans',Arial,sans-serif] text-[#1c1c22]">
      <svg aria-hidden="true" className="absolute size-0">
        <defs>
          <radialGradient id="grayBall" cx=".35" cy=".3"><stop stopColor="#fff" /><stop offset=".5" stopColor="#b5b5b5" /><stop offset="1" stopColor="#4c4c4c" /></radialGradient>
          <radialGradient id="blueBall" cx=".35" cy=".3"><stop stopColor="#d8e8ff" /><stop offset=".5" stopColor="#6d92e8" /><stop offset="1" stopColor="#3457b8" /></radialGradient>
          <radialGradient id="deepBall" cx=".35" cy=".3"><stop stopColor="#fff" /><stop offset=".35" stopColor="#3d78e0" /><stop offset="1" stopColor="#0b2c80" /></radialGradient>
          <radialGradient id="yellowBall" cx=".5" cy=".45"><stop stopColor="#fff" /><stop offset="1" stopColor="#c9bd63" /></radialGradient>
          <linearGradient id="rainbow" x1="0" y1="1" x2="0" y2="0"><stop stopColor="#3142d0" /><stop offset=".3" stopColor="#27c069" /><stop offset=".6" stopColor="#f4e526" /><stop offset="1" stopColor="#e12f20" /></linearGradient>
          <radialGradient id="rainbowBall" cx=".5" cy=".2" r=".9"><stop stopColor="#e62b1d" /><stop offset=".35" stopColor="#f2df26" /><stop offset=".65" stopColor="#30be54" /><stop offset="1" stopColor="#2948cc" /></radialGradient>
        </defs>
      </svg>
      <TopBar />
      <div className="flex min-h-0 flex-1 border-t border-[#b3bac8]">
        <Sidebar />
        <Viewport />
        <LayerPanel />
      </div>
      <StatusBar />
    </main>
  );
}
